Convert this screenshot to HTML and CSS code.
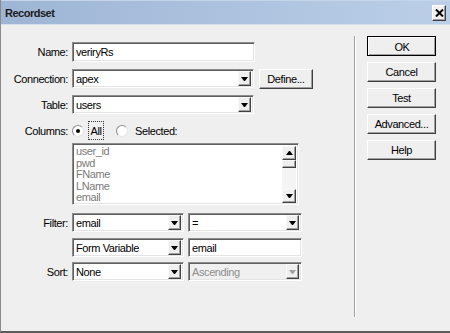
FILE: index.html
```html
<!DOCTYPE html>
<html lang="en">
<head>
    <meta charset="UTF-8">
    <title>Recordset</title>
    <link rel="stylesheet" href="styles.css">
</head>
<body>
    <div class="window">
        <div class="titlebar">
            <span class="title">Recordset</span>
            <span class="close">
                <svg width="9" height="8" viewBox="0 0 9 8"><path d="M1 0.5 L8 7.5 M8 0.5 L1 7.5" stroke="#000" stroke-width="2"/></svg>
            </span>
        </div>

        <div class="client">
            <div class="form">
                <div class="row row-name">
                    <label class="lbl">Name:</label>
                    <div class="field text w-wide">veriryRs</div>
                </div>

                <div class="row">
                    <label class="lbl">Connection:</label>
                    <div class="field select w-select">
                        <span class="val">apex</span><span class="drop"></span>
                    </div>
                    <span class="btn btn-define">Define...</span>
                </div>

                <div class="row">
                    <label class="lbl">Table:</label>
                    <div class="field select w-select">
                        <span class="val">users</span><span class="drop"></span>
                    </div>
                </div>

                <div class="row row-columns">
                    <label class="lbl">Columns:</label>
                    <span class="radio checked"></span>
                    <span class="radio-label focus">All</span>
                    <span class="radio radio-2"></span>
                    <span class="radio-label">Selected:</span>
                </div>

                <div class="listbox">
                    <div class="items">
                        <div>user_id</div>
                        <div>pwd</div>
                        <div>FName</div>
                        <div>LName</div>
                        <div>email</div>
                    </div>
                    <div class="scrollbar">
                        <span class="sb-btn up"></span>
                        <span class="sb-thumb"></span>
                        <span class="sb-track"></span>
                        <span class="sb-btn down"></span>
                    </div>
                </div>

                <div class="row row-filter">
                    <label class="lbl">Filter:</label>
                    <div class="field select w-half">
                        <span class="val">email</span><span class="drop"></span>
                    </div>
                    <div class="field select w-half2">
                        <span class="val">=</span><span class="drop"></span>
                    </div>
                </div>

                <div class="row row-var">
                    <label class="lbl"></label>
                    <div class="field select w-half">
                        <span class="val">Form Variable</span><span class="drop"></span>
                    </div>
                    <div class="field text w-half2">email</div>
                </div>

                <div class="row">
                    <label class="lbl">Sort:</label>
                    <div class="field select w-half">
                        <span class="val">None</span><span class="drop"></span>
                    </div>
                    <div class="field select w-half2 disabled">
                        <span class="val">Ascending</span><span class="drop"></span>
                    </div>
                </div>
            </div>

            <div class="sep"></div>

            <div class="actions">
                <span class="btn btn-default">OK</span>
                <span class="btn">Cancel</span>
                <span class="btn">Test</span>
                <span class="btn">Advanced...</span>
                <span class="btn">Help</span>
            </div>
        </div>
    </div>
</body>
</html>
```

FILE: styles.css
```css
html, body {
    margin: 0;
    padding: 0;
}
body {
    font-family: "Liberation Sans", Arial, sans-serif;
    font-size: 11px;
    letter-spacing: -0.4px;
    color: #000;
    background-color: #efefef;
}
.window {
    width: 450px;
    height: 333px;
    box-sizing: border-box;
    border-left: 1px solid #8a8a8a;
    border-bottom: 2px solid #5c5c5c;
    background-color: #efefef;
}
.titlebar {
    height: 25px;
    box-sizing: border-box;
    display: flex;
    align-items: center;
    justify-content: space-between;
    padding: 0 4px 0 4px;
    background: linear-gradient(to right, #9eb5d5, #aec3df 55%, #bbcfe8);
    border-top: 1px solid #c4d4ea;
    border-bottom: 1px solid #d6e0ee;
}
.title {
    font-weight: bold;
    color: #1b1b1b;
    letter-spacing: -0.5px;
}
.close {
    width: 14px;
    height: 16px;
    box-sizing: border-box;
    display: flex;
    align-items: center;
    justify-content: center;
    background-color: #f0f0f0;
    border: 1px solid;
    border-color: #fff #404040 #404040 #fff;
    box-shadow: inset -1px -1px #a0a0a0;
}
.client {
    display: flex;
    height: 306px;
}
.form {
    width: 353px;
    padding-top: 17px;
}
.row {
    display: flex;
    align-items: center;
    height: 19px;
    margin-bottom: 7px;
}
.row-name {
    height: 20px;
}
.row-columns {
    margin-bottom: 3px;
}
.row-filter {
    margin-bottom: 6px;
}
.row-var {
    margin-bottom: 5px;
}
.lbl {
    width: 67px;
    margin-right: 4px;
    text-align: right;
}
.field {
    height: 100%;
    box-sizing: border-box;
    background-color: #fff;
    border: 1px solid;
    border-color: #8c8c8c #fff #fff #8c8c8c;
    box-shadow: inset 1px 1px #5e5e5e, inset -1px -1px #e4e4e4;
}
.text {
    display: flex;
    align-items: center;
    padding-left: 3px;
}
.select {
    display: flex;
    align-items: center;
    padding: 2px;
}
.select .val {
    flex: 1;
    padding-left: 1px;
}
.drop {
    width: 13px;
    height: 15px;
    box-sizing: border-box;
    display: flex;
    align-items: center;
    justify-content: center;
    background-color: #efefef;
    border: 1px solid;
    border-color: #f8f8f8 #404040 #404040 #f8f8f8;
    box-shadow: inset -1px -1px #a0a0a0;
}
.drop::after {
    content: "";
    width: 1px;
    border-top: 4px solid #000;
    border-left: 3px solid transparent;
    border-right: 3px solid transparent;
}
.disabled {
    background-color: #f0f0f0;
    color: #8d8d8d;
}
.disabled .drop::after {
    border-top-color: #a0a0a0;
}
.w-wide {
    width: 183px;
}
.w-select {
    width: 182px;
}
.w-half {
    width: 112px;
    margin-right: 4px;
}
.w-half2 {
    width: 114px;
}
.btn {
    width: 69px;
    height: 20px;
    box-sizing: border-box;
    display: flex;
    align-items: center;
    justify-content: center;
    background-color: #efefef;
    border: 1px solid;
    border-color: #fff #404040 #404040 #fff;
    box-shadow: inset -1px -1px #a0a0a0;
}
.btn-define {
    width: 54px;
    margin-left: 5px;
}
.btn-default {
    outline: 1px solid #000;
    outline-offset: -1px;
    border-width: 2px 1px 1px 2px;
}
.radio {
    width: 12px;
    height: 12px;
    box-sizing: border-box;
    border-radius: 50%;
    background-color: #fff;
    border: 1px solid;
    border-color: #8c8c8c #e6e6e6 #e6e6e6 #8c8c8c;
    display: flex;
    align-items: center;
    justify-content: center;
}
.radio.checked::after {
    content: "";
    width: 4px;
    height: 4px;
    border-radius: 50%;
    background-color: #000;
}
.radio-label {
    height: 19px;
    box-sizing: border-box;
    display: flex;
    align-items: center;
    padding: 0 2px;
    margin-left: 4px;
}
.focus {
    border: 1px dotted #333;
    width: 16px;
    justify-content: center;
}
.radio-2 {
    margin-left: 12px;
}
.radio-2 + .radio-label {
    margin-left: 5px;
}
.listbox {
    display: flex;
    width: 227px;
    height: 62px;
    box-sizing: border-box;
    margin-left: 71px;
    margin-bottom: 8px;
    border: 1px solid;
    border-color: #8c8c8c #fff #fff #8c8c8c;
    box-shadow: inset 1px 1px #5e5e5e, inset -1px -1px #e4e4e4;
    padding: 2px 1px 1px 2px;
    background-color: #fff;
}
.items {
    flex: 1;
    overflow: hidden;
    color: #7a7a7a;
    line-height: 11.6px;
    padding-left: 1px;
}
.scrollbar {
    width: 14px;
    display: flex;
    flex-direction: column;
    background-color: #f4f4f4;
    margin-right: 1px;
}
.sb-btn, .sb-thumb {
    box-sizing: border-box;
    background-color: #efefef;
    border: 1px solid;
    border-color: #f8f8f8 #404040 #404040 #f8f8f8;
    box-shadow: inset -1px -1px #a0a0a0;
}
.sb-btn {
    height: 14px;
    display: flex;
    align-items: center;
    justify-content: center;
}
.sb-thumb {
    height: 8px;
}
.sb-track {
    flex: 1;
}
.sb-btn::after {
    content: "";
    width: 1px;
    border-left: 3px solid transparent;
    border-right: 3px solid transparent;
}
.sb-btn.up::after {
    border-bottom: 4px solid #000;
}
.sb-btn.down::after {
    border-top: 4px solid #000;
}
.sep {
    width: 0;
    height: 281px;
    margin-top: 11px;
    border-left: 1px solid #a0a0a0;
    border-right: 1px solid #fff;
}
.actions {
    display: flex;
    flex-direction: column;
    gap: 6px;
    padding: 11px 0 0 11px;
}
```
